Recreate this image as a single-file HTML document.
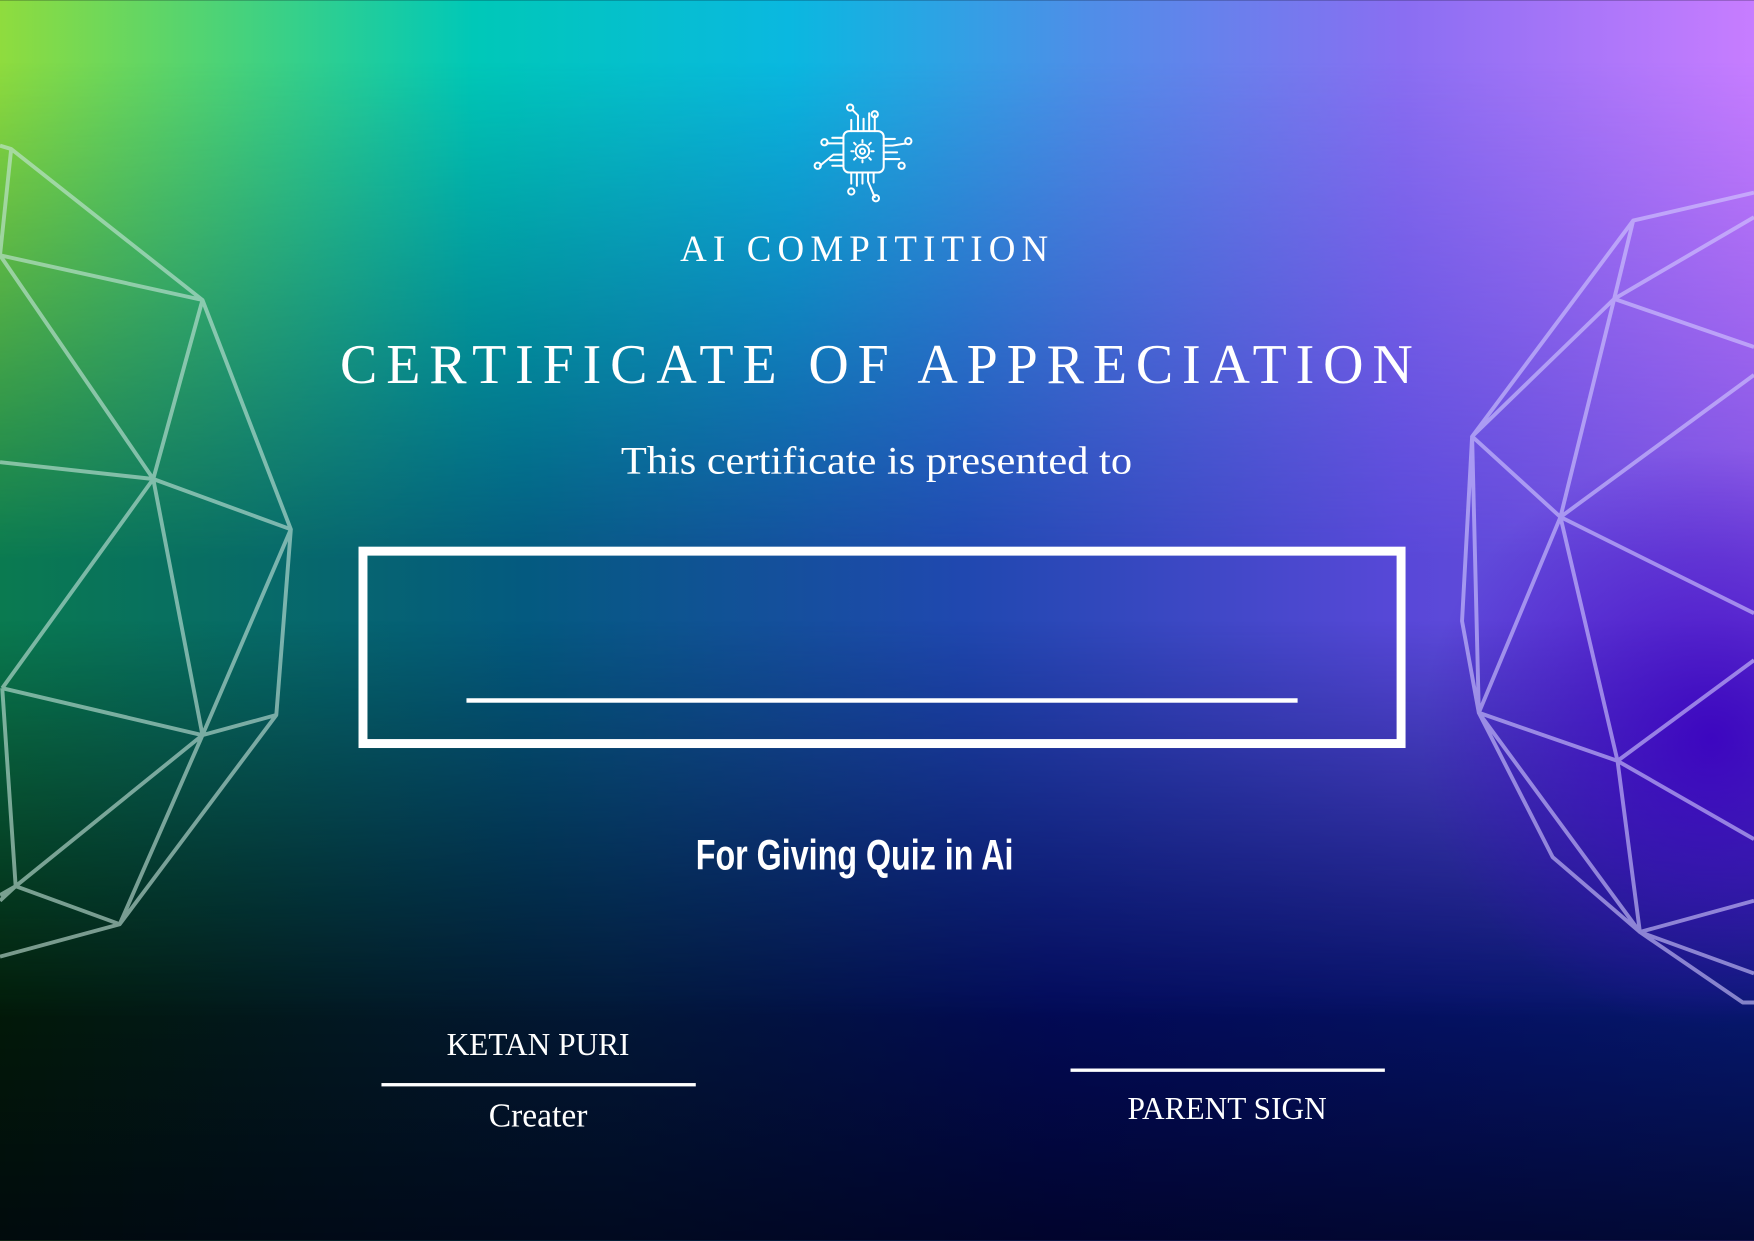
<!DOCTYPE html>
<html><head><meta charset="utf-8"><style>
html,body{margin:0;padding:0;width:1754px;height:1241px;overflow:hidden;background:#001}
svg{display:block}
</style></head><body>
<svg width="1754" height="1241" viewBox="0 0 1568 1109" xmlns="http://www.w3.org/2000/svg">
<defs>
<linearGradient id="h" x1="0" y1="0" x2="1" y2="0">
<stop offset="0" stop-color="#8fdc3e"/>
<stop offset="0.27" stop-color="#00c8b8"/>
<stop offset="0.45" stop-color="#0ab8e0"/>
<stop offset="0.62" stop-color="#4f8ee8"/>
<stop offset="0.8" stop-color="#8a6ef2"/>
<stop offset="1" stop-color="#c77dff"/>
</linearGradient>
<linearGradient id="h2" x1="0" y1="0" x2="1" y2="0">
<stop offset="0" stop-color="#0a7a50"/>
<stop offset="0.3" stop-color="#045a80"/>
<stop offset="0.55" stop-color="#2048b0"/>
<stop offset="0.8" stop-color="#5848d8"/>
<stop offset="1" stop-color="#7a50e0"/>
</linearGradient>
<linearGradient id="h3" x1="0" y1="0" x2="1" y2="0">
<stop offset="0" stop-color="#021a08"/>
<stop offset="0.35" stop-color="#021838"/>
<stop offset="0.6" stop-color="#020a58"/>
<stop offset="1" stop-color="#061870"/>
</linearGradient>
<linearGradient id="vm" x1="0" y1="0" x2="0" y2="1">
<stop offset="0.05" stop-color="#fff" stop-opacity="0"/>
<stop offset="0.45" stop-color="#fff" stop-opacity="1"/>
<stop offset="0.62" stop-color="#fff" stop-opacity="1"/>
</linearGradient>
<linearGradient id="vb" x1="0" y1="0" x2="0" y2="1">
<stop offset="0.5" stop-color="#fff" stop-opacity="0"/>
<stop offset="0.82" stop-color="#fff" stop-opacity="1"/>
</linearGradient>
<mask id="m1"><rect width="1568" height="1109" fill="url(#vm)"/></mask>
<mask id="m2"><rect width="1568" height="1109" fill="url(#vb)"/></mask>
<radialGradient id="rp" cx="1530" cy="660" r="260" gradientUnits="userSpaceOnUse">
<stop offset="0" stop-color="#3a00c0" stop-opacity="0.9"/>
<stop offset="1" stop-color="#3a00c0" stop-opacity="0"/>
</radialGradient>
<linearGradient id="bot" x1="0" y1="0" x2="0" y2="1">
<stop offset="0.8" stop-color="#000010" stop-opacity="0"/>
<stop offset="1" stop-color="#000010" stop-opacity="0.6"/>
</linearGradient>
</defs>
<rect width="1568" height="1109" fill="url(#h)"/>
<rect width="1568" height="1109" fill="url(#h2)" mask="url(#m1)"/>
<rect width="1568" height="1109" fill="url(#h3)" mask="url(#m2)"/>
<rect width="1568" height="1109" fill="url(#rp)"/>
<rect width="1568" height="1109" fill="url(#bot)"/>

<g stroke="#c8e6dc" stroke-opacity="0.6" stroke-width="3.5" fill="none" stroke-linejoin="round">
<path d="M0 130 L10 133 L0 228 M10 133 L181 268 L0 228 L137 428 L181 268 L260 473 L137 428 L0 413 M137 428 L2 615 M137 428 L181 657 L260 473 L247 639 L107 826 L0 855 M181 657 L247 639 M2 615 L181 657 L14 792 L2 615 M181 657 L107 826 L14 792 L0 800 M14 792 L0 805"/>
</g>
<g stroke="#d4ccff" stroke-opacity="0.6" stroke-width="3.5" fill="none" stroke-linejoin="round">
<path d="M1568 172 L1460 197 L1316 390 M1460 197 L1443 267 L1568 194 M1443 267 L1568 310 M1443 267 L1316 390 L1395 462 L1443 267 M1395 462 L1568 335 M1395 462 L1568 548 M1395 462 L1322 637 M1395 462 L1446 680 L1568 590 M1316 390 L1307 555 L1322 637 L1316 390 M1322 637 L1446 680 L1568 750 M1446 680 L1466 833 L1322 637 L1388 766 L1466 833 L1568 805 M1466 833 L1558 896 L1568 896 M1466 833 L1568 870"/>
</g>

<g stroke="#fff" stroke-width="1.8" fill="none" stroke-linecap="round">
<rect x="754" y="117" width="36" height="37" rx="5"/>
<circle cx="771" cy="135" r="6"/>
<circle cx="771" cy="135" r="2.3"/>
<path d="M771 127v-2 M771 143v2 M763 135h-2 M779 135h2 M765 129l-1.5-1.5 M777 141l1.5 1.5 M765 141l-1.5 1.5 M777 129l1.5-1.5"/>
<path d="M761 117v-10 M767 117v-14 L762 98 M772 117v-11 M777 117v-16 M782 117v-14"/>
<path d="M761 154v10 M766 154v12 M771 154v10 M776 154v8 L782 176 M781 154v9"/>
<path d="M754 123h-10 M754 128h-15 M754 138h-9 L733 148 M754 143h-12 M754 148h-10"/>
<path d="M790 124h10 M790 130h8 L810 128 M790 136h12 M790 142h14"/>
<circle cx="760" cy="96" r="2.8"/><circle cx="782" cy="102" r="2.8"/>
<circle cx="737" cy="127" r="2.8"/><circle cx="731" cy="148" r="2.8"/>
<circle cx="812" cy="126" r="2.8"/><circle cx="806" cy="148" r="2.8"/>
<circle cx="761" cy="171" r="2.8"/><circle cx="783" cy="177" r="2.8"/>
</g>

<g fill="#fff">
<text x="608" y="233" textLength="329" lengthAdjust="spacing" font-family="Liberation Serif, serif" font-size="33">AI COMPITITION</text>
<text x="304" y="342" textLength="959" lengthAdjust="spacing" font-family="Liberation Serif, serif" font-size="50">CERTIFICATE OF APPRECIATION</text>
<text x="555" y="423" textLength="457" lengthAdjust="spacingAndGlyphs" font-family="Liberation Serif, serif" font-size="35">This certificate is presented to</text>
<text x="622" y="777" textLength="284" lengthAdjust="spacingAndGlyphs" font-family="Liberation Sans Narrow, Liberation Sans, sans-serif" font-weight="bold" font-size="38">For Giving Quiz in Ai</text>
<g text-anchor="middle">
<text x="481" y="943" font-family="Liberation Serif, serif" font-size="28">KETAN PURI</text>
<text x="481" y="1007" font-family="Liberation Serif, serif" font-size="30">Creater</text>
<text x="1097" y="1000" font-family="Liberation Serif, serif" font-size="28">PARENT SIGN</text>
</g>
</g>
<rect x="324.5" y="492.5" width="928" height="172" fill="none" stroke="#fff" stroke-width="8"/>
<rect x="417" y="624" width="743" height="4" fill="#fff"/>
<rect x="341" y="968" width="281" height="3" fill="#fff"/>
<rect x="957" y="955" width="281" height="3" fill="#fff"/>
</svg>
</body></html>
